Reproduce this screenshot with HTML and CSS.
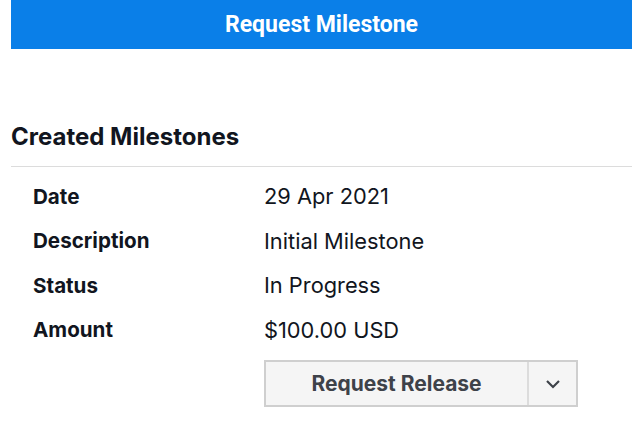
FILE: index.html
```html
<!DOCTYPE html>
<html>
<head>
<meta charset="utf-8">
<link rel="stylesheet" href="styles.css">
</head>
<body>
<div class="page">
  <button class="primary">Request Milestone</button>
  <h2 class="section-title">Created Milestones</h2>
  <div class="details">
    <div class="row"><span class="label">Date</span><span class="value">29 Apr 2021</span></div>
    <div class="row"><span class="label">Description</span><span class="value">Initial Milestone</span></div>
    <div class="row"><span class="label">Status</span><span class="value">In Progress</span></div>
    <div class="row"><span class="label">Amount</span><span class="value">$100.00 USD</span></div>
    <div class="row actions">
      <span class="label"></span>
      <div class="split">
        <button class="split-main">Request Release</button>
        <button class="split-toggle" aria-label="More">
          <svg width="16" height="10" viewBox="0 0 16 10"><path d="M2 2 L8 8 L14 2" fill="none" stroke="#3e4249" stroke-width="2.2"/></svg>
        </button>
      </div>
    </div>
  </div>
</div>
</body>
</html>
```
FILE: styles.css
```css
* { box-sizing: border-box; }
html, body { margin: 0; padding: 0; background: #fff; }
body { font-family: Inter, "Liberation Sans", sans-serif; color: #111520; }
.page { margin: 0 8px 0 11px; }
.primary {
  display: block;
  width: 100%;
  height: 49px;
  border: 0;
  background: #0a7fe8;
  color: #fff;
  font-family: Roboto, "Liberation Sans", sans-serif;
  font-weight: 700;
  font-size: 23px;
  cursor: pointer;
}
.section-title {
  margin: 73px 0 0;
  font-size: 24px;
  font-weight: 700;
  line-height: 30px;
  padding-bottom: 14px;
  border-bottom: 1px solid #dcdcdc;
}
.details { padding: 7px 0 0 22px; }
.row {
  display: grid;
  grid-template-columns: 231px 1fr;
  align-items: center;
  height: 44.5px;
}
.label { font-weight: 700; font-size: 20.6px; }
.value { font-weight: 400; font-size: 21.8px; }
.row.actions { height: auto; margin-top: 8px; }
.split {
  display: flex;
  width: 314px;
  height: 47px;
  border: 2px solid #cfcfcf;
  background: #f5f5f5;
}
.split button {
  border: 0;
  background: transparent;
  font-family: Inter, "Liberation Sans", sans-serif;
  color: #3e4249;
}
.split-main {
  flex: 1;
  font-size: 21px;
  font-weight: 700;
  border-right: 2px solid #dcdcdc !important;
}
.split-toggle {
  width: 47px;
  display: flex;
  align-items: center;
  justify-content: center;
}
```
